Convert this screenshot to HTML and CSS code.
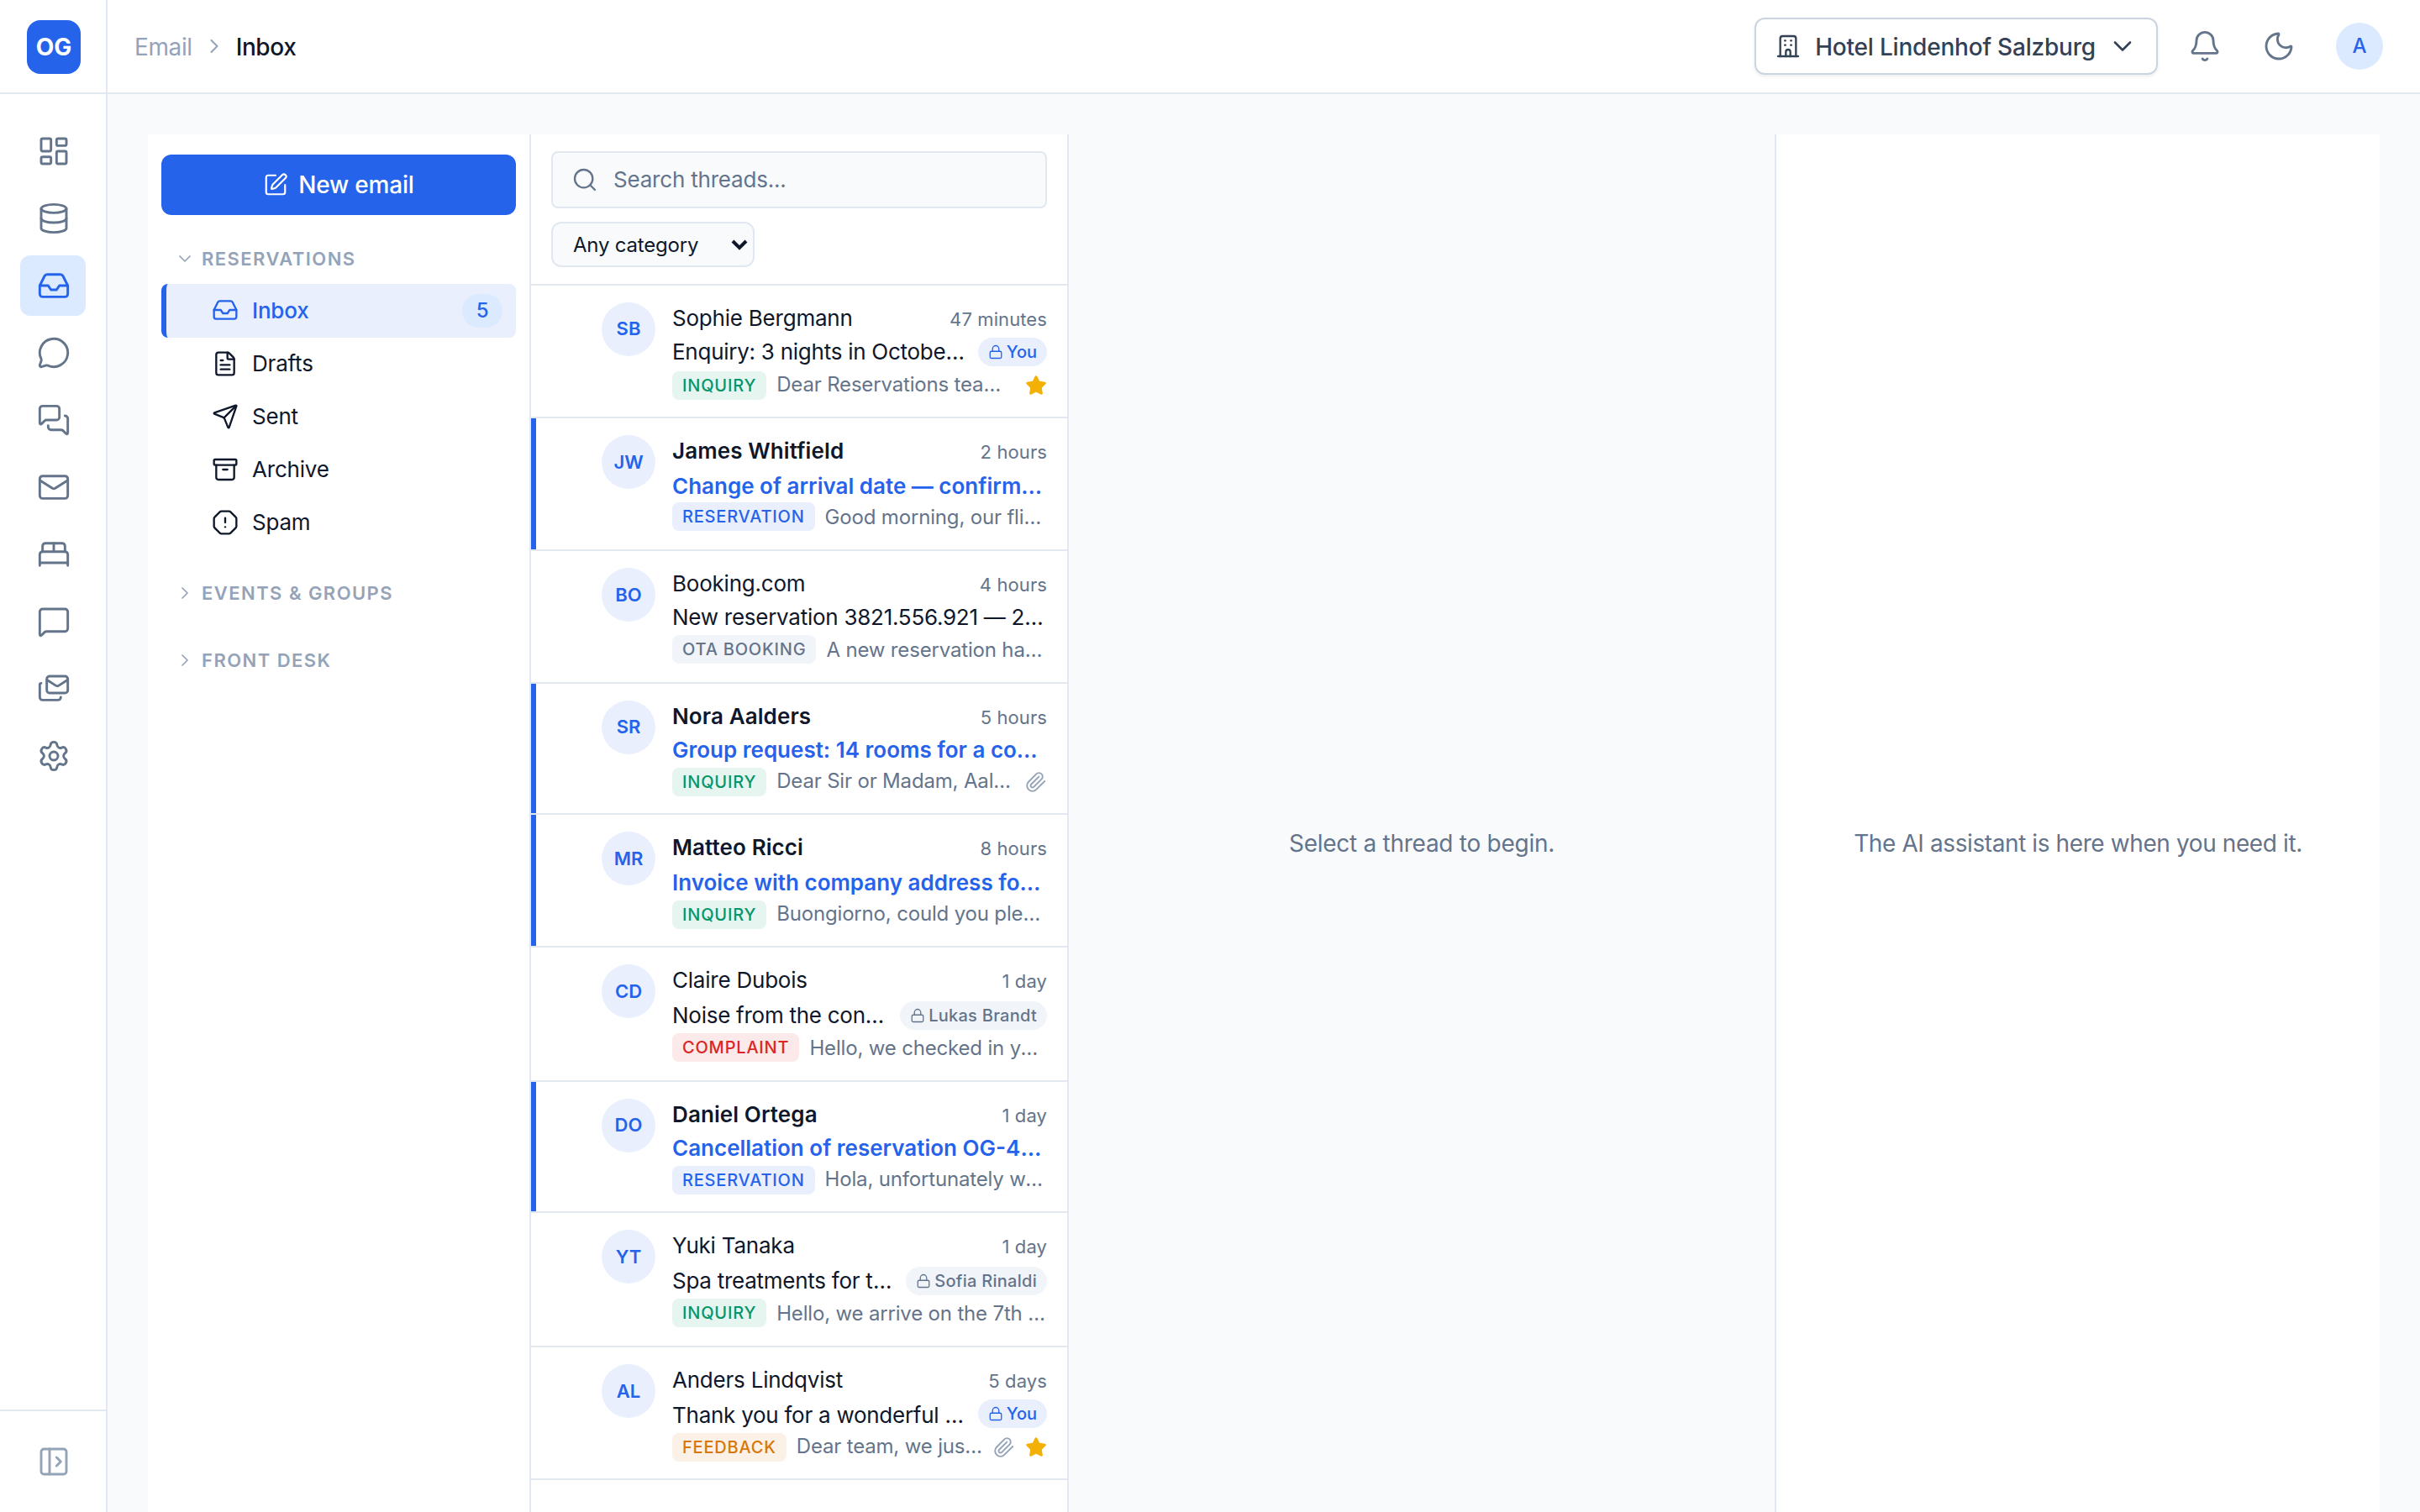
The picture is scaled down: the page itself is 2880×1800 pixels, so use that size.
FILE: index.html
```html
<!DOCTYPE html>
<html lang="en">

<head>
    <meta charset="UTF-8">
    <meta name="viewport" content="width=device-width, initial-scale=1.0">
    <title>Inbox</title>
    <link rel="stylesheet" href="styles.css">
</head>

<body>
    <svg class="sprite" aria-hidden="true">
        <symbol id="i-dashboard" viewBox="0 0 24 24"><rect width="7" height="9" x="3" y="3" rx="1"/><rect width="7" height="5" x="14" y="3" rx="1"/><rect width="7" height="9" x="14" y="12" rx="1"/><rect width="7" height="5" x="3" y="16" rx="1"/></symbol>
        <symbol id="i-database" viewBox="0 0 24 24"><ellipse cx="12" cy="5" rx="9" ry="3"/><path d="M3 5v14a9 3 0 0 0 18 0V5"/><path d="M3 12a9 3 0 0 0 18 0"/></symbol>
        <symbol id="i-inbox" viewBox="0 0 24 24"><path d="M22 12h-6l-2 3h-4l-2-3H2"/><path d="M5.45 5.11 2 12v6a2 2 0 0 0 2 2h16a2 2 0 0 0 2-2v-6l-3.45-6.89A2 2 0 0 0 16.76 4H7.24a2 2 0 0 0-1.79 1.11z"/></symbol>
        <symbol id="i-circle" viewBox="0 0 24 24"><path d="M2.992 16.342a2 2 0 0 1 .094 1.167l-1.065 3.29a1 1 0 0 0 1.236 1.168l3.413-.998a2 2 0 0 1 1.099.092 10 10 0 1 0-4.777-4.719"/></symbol>
        <symbol id="i-messages" viewBox="0 0 24 24"><path d="M16 10a2 2 0 0 1-2 2H6.828a2 2 0 0 0-1.414.586l-2.202 2.202A.71.71 0 0 1 2 14.286V4a2 2 0 0 1 2-2h10a2 2 0 0 1 2 2z"/><path d="M20 9a2 2 0 0 1 2 2v10.286a.71.71 0 0 1-1.212.502l-2.202-2.202A2 2 0 0 0 17.172 19H10a2 2 0 0 1-2-2v-1"/></symbol>
        <symbol id="i-mail" viewBox="0 0 24 24"><path d="m22 7-8.991 5.727a2 2 0 0 1-2.009 0L2 7"/><rect x="2" y="4" width="20" height="16" rx="2"/></symbol>
        <symbol id="i-bed" viewBox="0 0 24 24"><path d="M2 20v-8a2 2 0 0 1 2-2h16a2 2 0 0 1 2 2v8"/><path d="M4 10V6a2 2 0 0 1 2-2h12a2 2 0 0 1 2 2v4"/><path d="M12 4v6"/><path d="M2 18h20"/></symbol>
        <symbol id="i-message" viewBox="0 0 24 24"><path d="M22 17a2 2 0 0 1-2 2H6.828a2 2 0 0 0-1.414.586l-2.202 2.202A.71.71 0 0 1 2 21.286V5a2 2 0 0 1 2-2h16a2 2 0 0 1 2 2z"/></symbol>
        <symbol id="i-mails" viewBox="0 0 24 24"><path d="M17 18a2 2 0 0 1-2 2H4a2 2 0 0 1-2-2V9a1 1 0 0 1 1-1"/><path d="m22 5.5-6.419 4.179a2 2 0 0 1-2.162 0L7 5.5"/><rect x="7" y="3" width="15" height="12" rx="2"/></symbol>
        <symbol id="i-settings" viewBox="0 0 24 24"><path d="M9.671 4.136a2.34 2.34 0 0 1 4.659 0 2.34 2.34 0 0 0 3.319 1.915 2.34 2.34 0 0 1 2.33 4.033 2.34 2.34 0 0 0 0 3.831 2.34 2.34 0 0 1-2.33 4.033 2.34 2.34 0 0 0-3.319 1.915 2.34 2.34 0 0 1-4.659 0 2.34 2.34 0 0 0-3.32-1.915 2.34 2.34 0 0 1-2.33-4.033 2.34 2.34 0 0 0 0-3.831A2.34 2.34 0 0 1 6.35 6.051a2.34 2.34 0 0 0 3.319-1.915"/><circle cx="12" cy="12" r="3"/></symbol>
        <symbol id="i-panel" viewBox="0 0 24 24"><rect width="18" height="18" x="3" y="3" rx="2"/><path d="M9 3v18"/><path d="m14 9 3 3-3 3"/></symbol>
        <symbol id="i-right" viewBox="0 0 24 24"><path d="m9 18 6-6-6-6"/></symbol>
        <symbol id="i-down" viewBox="0 0 24 24"><path d="m6 9 6 6 6-6"/></symbol>
        <symbol id="i-building" viewBox="0 0 24 24"><path d="M3 21h18"/><path d="M5 21V5a2 2 0 0 1 2-2h10a2 2 0 0 1 2 2v16"/><path d="M10 21v-4a2 2 0 0 1 4 0v4"/><path d="M9.1 7h.5M14.4 7h.5M9.1 11h.5M14.4 11h.5"/></symbol>
        <symbol id="i-bell" viewBox="0 0 24 24"><path d="M10.268 21a2 2 0 0 0 3.464 0"/><path d="M3.262 15.326A1 1 0 0 0 4 17h16a1 1 0 0 0 .74-1.673C19.41 13.956 18 12.499 18 8A6 6 0 0 0 6 8c0 4.499-1.411 5.956-2.738 7.326"/></symbol>
        <symbol id="i-moon" viewBox="0 0 24 24"><path d="M20.985 12.486a9 9 0 1 1-9.473-9.472c.405-.022.617.46.402.803a6 6 0 0 0 8.268 8.268c.344-.215.825-.004.803.401"/></symbol>
        <symbol id="i-pen" viewBox="0 0 24 24"><path d="M12 3H5a2 2 0 0 0-2 2v14a2 2 0 0 0 2 2h14a2 2 0 0 0 2-2v-7"/><path d="M18.375 2.625a1 1 0 0 1 3 3l-9.013 9.014a2 2 0 0 1-.853.505l-2.873.84a.5.5 0 0 1-.62-.62l.84-2.873a2 2 0 0 1 .506-.852z"/></symbol>
        <symbol id="i-file" viewBox="0 0 24 24"><path d="M6 22a2 2 0 0 1-2-2V4a2 2 0 0 1 2-2h8a2.4 2.4 0 0 1 1.704.706l3.588 3.588A2.4 2.4 0 0 1 20 8v12a2 2 0 0 1-2 2z"/><path d="M14 2v5a1 1 0 0 0 1 1h5"/><path d="M10 9H8"/><path d="M16 13H8"/><path d="M16 17H8"/></symbol>
        <symbol id="i-send" viewBox="0 0 24 24"><path d="M14.536 21.686a.5.5 0 0 0 .937-.024l6.5-19a.496.496 0 0 0-.635-.635l-19 6.5a.5.5 0 0 0-.024.937l7.93 3.18a2 2 0 0 1 1.112 1.11z"/><path d="m21.854 2.147-10.94 10.939"/></symbol>
        <symbol id="i-archive" viewBox="0 0 24 24"><rect width="20" height="5" x="2" y="3" rx="1"/><path d="M4 8v11a2 2 0 0 0 2 2h12a2 2 0 0 0 2-2V8"/><path d="M10 12h4"/></symbol>
        <symbol id="i-spam" viewBox="0 0 24 24"><path d="M12 16h.01"/><path d="M12 8v4"/><path d="M15.312 2a2 2 0 0 1 1.414.586l4.688 4.688A2 2 0 0 1 22 8.688v6.624a2 2 0 0 1-.586 1.414l-4.688 4.688a2 2 0 0 1-1.414.586H8.688a2 2 0 0 1-1.414-.586l-4.688-4.688A2 2 0 0 1 2 15.312V8.688a2 2 0 0 1 .586-1.414l4.688-4.688A2 2 0 0 1 8.688 2z"/></symbol>
        <symbol id="i-search" viewBox="0 0 24 24"><path d="m21 21-4.34-4.34"/><circle cx="11" cy="11" r="8"/></symbol>
        <symbol id="i-lock" viewBox="0 0 24 24"><rect width="18" height="11" x="3" y="11" rx="2"/><path d="M7 11V7a5 5 0 0 1 10 0v4"/></symbol>
        <symbol id="i-clip" viewBox="0 0 24 24"><path d="m21.44 11.05-9.19 9.19a6 6 0 0 1-8.49-8.49l8.57-8.57A4 4 0 1 1 18 8.84l-8.59 8.57a2 2 0 0 1-2.83-2.83l8.49-8.48"/></symbol>
        <symbol id="i-star" viewBox="0 0 24 24"><path d="M11.525 2.295a.53.53 0 0 1 .95 0l2.31 4.679a2.123 2.123 0 0 0 1.595 1.16l5.166.756a.53.53 0 0 1 .294.904l-3.736 3.638a2.123 2.123 0 0 0-.611 1.878l.882 5.14a.53.53 0 0 1-.771.56l-4.618-2.428a2.122 2.122 0 0 0-1.973 0L6.396 21.01a.53.53 0 0 1-.77-.56l.881-5.139a2.122 2.122 0 0 0-.611-1.879L2.16 9.795a.53.53 0 0 1 .294-.906l5.165-.755a2.122 2.122 0 0 0 1.597-1.16z"/></symbol>
    </svg>

    <div class="app">
        <aside class="rail">
            <div class="rail-top">
                <div class="logo">OG</div>
            </div>
            <nav class="rail-nav">
                <a class="rail-item"><svg class="icon"><use href="#i-dashboard"/></svg></a>
                <a class="rail-item"><svg class="icon"><use href="#i-database"/></svg></a>
                <a class="rail-item active"><svg class="icon"><use href="#i-inbox"/></svg></a>
                <a class="rail-item"><svg class="icon"><use href="#i-circle"/></svg></a>
                <a class="rail-item"><svg class="icon"><use href="#i-messages"/></svg></a>
                <a class="rail-item"><svg class="icon"><use href="#i-mail"/></svg></a>
                <a class="rail-item"><svg class="icon"><use href="#i-bed"/></svg></a>
                <a class="rail-item"><svg class="icon"><use href="#i-message"/></svg></a>
                <a class="rail-item"><svg class="icon"><use href="#i-mails"/></svg></a>
                <a class="rail-item"><svg class="icon"><use href="#i-settings"/></svg></a>
            </nav>
            <div class="rail-bottom"><svg class="icon"><use href="#i-panel"/></svg></div>
        </aside>

        <div class="main">
            <header class="topbar">
                <div class="crumbs">
                    <span class="crumb-parent">Email</span>
                    <svg class="icon crumb-sep"><use href="#i-right"/></svg>
                    <span class="crumb-current">Inbox</span>
                </div>
                <button class="hotel">
                    <svg class="icon hotel-icon"><use href="#i-building"/></svg>
                    <span class="hotel-name">Hotel Lindenhof Salzburg</span>
                    <svg class="icon hotel-arrow"><use href="#i-down"/></svg>
                </button>
                <div class="top-actions">
                    <a class="top-btn"><svg class="icon"><use href="#i-bell"/></svg></a>
                    <a class="top-btn"><svg class="icon"><use href="#i-moon"/></svg></a>
                </div>
                <div class="user">A</div>
            </header>

            <div class="workspace">
                <section class="folders">
                    <button class="compose"><svg class="icon"><use href="#i-pen"/></svg>New email</button>
                    <div class="group"><svg class="icon"><use href="#i-down"/></svg>RESERVATIONS</div>
                    <ul class="folder-list">
                        <li class="folder active"><svg class="icon"><use href="#i-inbox"/></svg>Inbox<span class="count">5</span></li>
                        <li class="folder"><svg class="icon"><use href="#i-file"/></svg>Drafts</li>
                        <li class="folder"><svg class="icon"><use href="#i-send"/></svg>Sent</li>
                        <li class="folder"><svg class="icon"><use href="#i-archive"/></svg>Archive</li>
                        <li class="folder"><svg class="icon"><use href="#i-spam"/></svg>Spam</li>
                    </ul>
                    <div class="group"><svg class="icon"><use href="#i-right"/></svg>EVENTS &amp; GROUPS</div>
                    <div class="group"><svg class="icon"><use href="#i-right"/></svg>FRONT DESK</div>
                </section>

                <section class="threads">
                    <div class="filters">
                        <div class="search"><svg class="icon"><use href="#i-search"/></svg><span class="search-text">Search threads...</span></div>
                        <div class="category">Any category<svg class="category-arrow" viewBox="0 0 20 14"><path d="m2 3 8 8 8-8"/></svg></div>
                    </div>

                    <article class="thread initials-up tag-down">
                        <div class="avatar">SB</div>
                        <div class="thread-body">
                            <div class="line-name"><span class="name">Sophie Bergmann</span><span class="time">47 minutes</span></div>
                            <div class="line-subject"><span class="subject">Enquiry: 3 nights in October for two adults</span><span class="owner mine"><svg class="icon"><use href="#i-lock"/></svg>You</span></div>
                            <div class="line-preview"><span class="tag green">INQUIRY</span><span class="preview">Dear Reservations team, we would like to stay</span><svg class="icon star"><use href="#i-star"/></svg></div>
                        </div>
                    </article>

                    <article class="thread unread subject-down">
                        <div class="avatar">JW</div>
                        <div class="thread-body">
                            <div class="line-name"><span class="name">James Whitfield</span><span class="time">2 hours</span></div>
                            <div class="line-subject"><span class="subject">Change of arrival date — confirmation needed</span></div>
                            <div class="line-preview"><span class="tag blue">RESERVATION</span><span class="preview">Good morning, our flight has been moved</span></div>
                        </div>
                    </article>

                    <article class="thread">
                        <div class="avatar">BO</div>
                        <div class="thread-body">
                            <div class="line-name"><span class="name">Booking.com</span><span class="time">4 hours</span></div>
                            <div class="line-subject"><span class="subject">New reservation 3821.556.921 — 2 nights</span></div>
                            <div class="line-preview"><span class="tag gray">OTA BOOKING</span><span class="preview">A new reservation has been made</span></div>
                        </div>
                    </article>

                    <article class="thread unread initials-up short">
                        <div class="avatar">SR</div>
                        <div class="thread-body">
                            <div class="line-name"><span class="name">Nora Aalders</span><span class="time">5 hours</span></div>
                            <div class="line-subject"><span class="subject">Group request: 14 rooms for a company retreat</span></div>
                            <div class="line-preview"><span class="tag green">INQUIRY</span><span class="preview">Dear Sir or Madam, Aalders Group is planning</span><svg class="icon clip"><use href="#i-clip"/></svg></div>
                        </div>
                    </article>

                    <article class="thread unread subject-down tag-down">
                        <div class="avatar">MR</div>
                        <div class="thread-body">
                            <div class="line-name"><span class="name">Matteo Ricci</span><span class="time">8 hours</span></div>
                            <div class="line-subject"><span class="subject">Invoice with company address for our stay</span></div>
                            <div class="line-preview"><span class="tag green">INQUIRY</span><span class="preview">Buongiorno, could you please send the invoice</span></div>
                        </div>
                    </article>

                    <article class="thread subject-down tag-down tall">
                        <div class="avatar">CD</div>
                        <div class="thread-body">
                            <div class="line-name"><span class="name">Claire Dubois</span><span class="time">1 day</span></div>
                            <div class="line-subject"><span class="subject">Noise from the construction site</span><span class="owner"><svg class="icon"><use href="#i-lock"/></svg>Lukas Brandt</span></div>
                            <div class="line-preview"><span class="tag red">COMPLAINT</span><span class="preview">Hello, we checked in yesterday evening</span></div>
                        </div>
                    </article>

                    <article class="thread unread initials-up short">
                        <div class="avatar">DO</div>
                        <div class="thread-body">
                            <div class="line-name"><span class="name">Daniel Ortega</span><span class="time">1 day</span></div>
                            <div class="line-subject"><span class="subject">Cancellation of reservation OG-48213</span></div>
                            <div class="line-preview"><span class="tag blue">RESERVATION</span><span class="preview">Hola, unfortunately we have to cancel</span></div>
                        </div>
                    </article>

                    <article class="thread subject-down tag-down tall">
                        <div class="avatar">YT</div>
                        <div class="thread-body">
                            <div class="line-name"><span class="name">Yuki Tanaka</span><span class="time">1 day</span></div>
                            <div class="line-subject"><span class="subject">Spa treatments for two guests</span><span class="owner"><svg class="icon"><use href="#i-lock"/></svg>Sofia Rinaldi</span></div>
                            <div class="line-preview"><span class="tag green">INQUIRY</span><span class="preview">Hello, we arrive on the 7th and would like</span></div>
                        </div>
                    </article>

                    <article class="thread subject-down tag-down">
                        <div class="avatar">AL</div>
                        <div class="thread-body">
                            <div class="line-name"><span class="name">Anders Lindqvist</span><span class="time">5 days</span></div>
                            <div class="line-subject"><span class="subject">Thank you for a wonderful weekend</span><span class="owner mine"><svg class="icon"><use href="#i-lock"/></svg>You</span></div>
                            <div class="line-preview"><span class="tag orange">FEEDBACK</span><span class="preview">Dear team, we just got home</span><svg class="icon clip"><use href="#i-clip"/></svg><svg class="icon star"><use href="#i-star"/></svg></div>
                        </div>
                    </article>
                </section>

                <section class="reader">Select a thread to begin.</section>
                <section class="assistant">The AI assistant is here when you need it.</section>
            </div>
        </div>
    </div>
</body>

</html>
```
FILE: styles.css
```css
:root {
    --blue: #2563eb;
    --blue-soft: #e9effd;
    --blue-light: #dbeafe;
    --ink: #0f172a;
    --slate: #64748b;
    --muted: #94a3b8;
    --line: #e2e8f0;
    --canvas: #f8fafc;
}

* {
    box-sizing: border-box;
}

body {
    margin: 0;
    height: 1800px;
    overflow: hidden;
    background: var(--canvas);
    color: var(--ink);
    font-family: Inter, "Liberation Sans", sans-serif;
    font-size: 28px;
}

button {
    font: inherit;
}

.sprite {
    display: none;
}

.icon {
    width: 40px;
    height: 40px;
    flex: none;
    fill: none;
    stroke: currentColor;
    stroke-width: 1.75;
    stroke-linecap: round;
    stroke-linejoin: round;
}

.app {
    display: flex;
    height: 1800px;
}

/* left rail */
.rail {
    display: flex;
    flex-direction: column;
    width: 128px;
    flex: none;
    background: #fff;
    border-right: 2px solid var(--line);
    color: var(--slate);
}

.rail-top {
    height: 112px;
    padding: 24px 0 0 32px;
    border-bottom: 2px solid var(--line);
}

.logo {
    width: 64px;
    height: 64px;
    border-radius: 16px;
    background: var(--blue);
    color: #fff;
    font-weight: 700;
    line-height: 65px;
    text-align: center;
}

.rail-nav {
    display: flex;
    flex: 1;
    flex-direction: column;
    gap: 8px;
    padding: 32px 24px;
}

.rail-item {
    display: flex;
    align-items: center;
    height: 72px;
    padding-left: 20px;
    border-radius: 12px;
}

.rail-item.active {
    background: var(--blue-light);
    color: var(--blue);
}

.rail-bottom {
    display: flex;
    align-items: center;
    height: 122px;
    padding-left: 44px;
    border-top: 2px solid var(--line);
    color: var(--muted);
}

/* top bar */
.main {
    flex: 1;
    min-width: 0;
}

.topbar {
    display: flex;
    align-items: center;
    height: 112px;
    padding: 0 44px 0 32px;
    background: #fff;
    border-bottom: 2px solid var(--line);
}

.crumbs {
    display: flex;
    align-items: center;
    gap: 12px;
    margin-right: auto;
    letter-spacing: -.4px;
}

.crumb-parent,
.crumb-current,
.hotel-name {
    padding-top: 2px;
}

.crumb-parent,
.crumb-sep {
    color: var(--muted);
}

.crumb-sep {
    width: 28px;
    height: 28px;
}

.crumb-current {
    font-weight: 500;
}

.hotel {
    display: flex;
    align-items: center;
    height: 68px;
    padding: 0 22px;
    margin-right: 20px;
    border: 2px solid #cbd5e1;
    border-radius: 12px;
    background: #fff;
    box-shadow: 0 2px 4px rgba(15, 23, 42, .08);
    color: #334155;
    font-weight: 500;
    letter-spacing: -.2px;
}

.hotel-icon {
    width: 32px;
    height: 32px;
    margin-right: 16px;
}

.hotel-arrow {
    width: 36px;
    height: 36px;
    margin-left: 14px;
}

.top-actions {
    display: flex;
    gap: 16px;
    margin-right: 32px;
    color: var(--slate);
}

.top-btn {
    display: flex;
    padding: 16px;
}

.user {
    width: 56px;
    height: 56px;
    border-radius: 50%;
    background: var(--blue-light);
    color: var(--blue);
    font-size: 24px;
    font-weight: 500;
    line-height: 56px;
    text-align: center;
}

.workspace {
    display: flex;
    height: 1688px;
    margin: 48px 48px 0;
}

/* folders */
.folders {
    width: 456px;
    padding: 24px 16px;
    background: #fff;
    border-right: 2px solid var(--line);
}

.compose {
    display: flex;
    align-items: center;
    justify-content: center;
    gap: 12px;
    width: 100%;
    height: 72px;
    margin-bottom: 34px;
    border: 0;
    border-radius: 12px;
    background: var(--blue);
    color: #fff;
    font-weight: 500;
    letter-spacing: -.2px;
}

.compose .icon {
    width: 30px;
    height: 30px;
}

.group {
    display: flex;
    align-items: center;
    gap: 8px;
    height: 36px;
    margin-bottom: 44px;
    padding-left: 16px;
    color: var(--muted);
    font-size: 22px;
    font-weight: 600;
    letter-spacing: 1.45px;
}

.group .icon {
    width: 24px;
    height: 24px;
}

.folder-list {
    margin: -32px 0 34px;
    padding: 0;
    list-style: none;
}

.folder {
    display: flex;
    align-items: center;
    height: 63px;
    padding: 0 16px 2px 54px;
    border-left: 6px solid transparent;
    border-radius: 8px;
    font-size: 26px;
    letter-spacing: -.2px;
}

.folder.active {
    height: 64px;
    border-color: var(--blue);
    background: var(--blue-soft);
    color: var(--blue);
    font-weight: 500;
}

.folder .icon {
    width: 32px;
    height: 32px;
    margin-right: 16px;
}

.count {
    width: 48px;
    height: 40px;
    margin: 2px 0 0 auto;
    border-radius: 20px;
    background: var(--blue-light);
    font-size: 24px;
    line-height: 40px;
    text-align: center;
}

/* thread list */
.threads {
    width: 640px;
    background: #fff;
    border-right: 2px solid var(--line);
}

.filters {
    height: 180px;
    padding: 20px 24px 0;
    border-bottom: 2px solid var(--line);
}

.search {
    display: flex;
    align-items: center;
    height: 68px;
    padding-left: 22px;
    border: 2px solid var(--line);
    border-radius: 8px;
    background: var(--canvas);
    color: var(--slate);
    font-size: 26px;
    letter-spacing: -.2px;
}

.search .icon {
    width: 32px;
    height: 32px;
    margin-right: 18px;
}

.search-text {
    padding-bottom: 2px;
}

.category {
    display: flex;
    align-items: center;
    justify-content: space-between;
    width: 242px;
    height: 54px;
    margin-top: 16px;
    padding: 0 6px 0 24px;
    border: 2px solid var(--line);
    border-radius: 12px;
    background: var(--canvas);
    font-size: 24px;
    letter-spacing: -.2px;
}

.category-arrow {
    width: 20px;
    height: 14px;
    fill: none;
    stroke: var(--ink);
    stroke-width: 4;
}

.thread {
    --initials: 64px;
    --subject: 0px;
    --owner: 0px;
    --tag: 0px;
    --preview: 0px;
    display: flex;
    height: 158px;
    padding: 20px 24px 0 84px;
    border-bottom: 2px solid var(--line);
}

.thread.unread {
    box-shadow: inset 6px 0 var(--blue);
}

.thread.initials-up {
    --initials: 62px;
}

.thread.subject-down {
    --subject: 2px;
}

.thread.tag-down {
    --tag: 2px;
}

.thread.short {
    --preview: -2px;
    height: 156px;
}

.thread.tall {
    --owner: 2px;
    --preview: 2px;
    height: 160px;
}

.avatar {
    width: 64px;
    height: 64px;
    margin-right: 20px;
    flex: none;
    border-radius: 50%;
    background: var(--blue-soft);
    color: var(--blue);
    font-size: 22px;
    font-weight: 600;
    line-height: var(--initials);
    text-align: center;
}

.thread-body {
    flex: 1;
    min-width: 0;
}

.line-name {
    display: flex;
    align-items: baseline;
    justify-content: space-between;
    height: 40px;
    font-size: 26px;
    line-height: 38px;
}

.name {
    letter-spacing: -.22px;
}

.time {
    color: var(--slate);
    font-size: 22px;
    letter-spacing: .1px;
}

.line-subject,
.line-preview {
    display: flex;
    align-items: flex-start;
    height: 40px;
}

.subject,
.preview {
    flex: 1;
    overflow: hidden;
    text-overflow: ellipsis;
    white-space: nowrap;
}

.subject {
    margin-top: var(--subject);
    font-size: 26px;
    letter-spacing: -.26px;
    line-height: 38px;
}

.unread .name,
.unread .subject {
    font-weight: 600;
    letter-spacing: 0;
}

.unread .name {
    letter-spacing: .1px;
}

.unread .subject {
    color: var(--blue);
}

.owner {
    display: flex;
    align-items: center;
    gap: 4px;
    height: 34px;
    margin: calc(2px + var(--owner)) 0 0 12px;
    padding: 0 12px;
    border-radius: 17px;
    background: #f1f5f9;
    color: var(--slate);
    font-size: 20px;
    font-weight: 500;
    letter-spacing: .27px;
}

.owner.mine {
    background: var(--blue-soft);
    color: var(--blue);
    letter-spacing: 0;
}

.owner .icon {
    width: 18px;
    height: 18px;
}

.tag {
    height: 34px;
    margin: var(--tag) 12px 0 0;
    padding: 0 12px;
    border-radius: 8px;
    font-size: 20px;
    font-weight: 500;
    letter-spacing: .8px;
    line-height: 34px;
}

.tag.green {
    background: #e6f5f0;
    color: #059669;
}

.tag.blue {
    background: var(--blue-soft);
    color: var(--blue);
}

.tag.gray {
    background: #f1f5f9;
    color: var(--slate);
}

.tag.red {
    background: #fce9e9;
    color: #dc2626;
}

.tag.orange {
    background: #fbf1e6;
    color: #d97706;
}

.preview {
    margin-top: var(--preview);
    color: var(--slate);
    font-size: 24px;
    letter-spacing: -.17px;
    line-height: 36px;
}

.line-preview .icon {
    width: 26px;
    height: 26px;
    margin: calc(6px + var(--preview)) 0 0 12px;
}

.clip {
    color: var(--muted);
}

.line-preview .star {
    fill: #f3b106;
    stroke: #f3b106;
}

/* empty states */
.reader,
.assistant {
    display: flex;
    align-items: center;
    justify-content: center;
    color: var(--slate);
}

.reader {
    width: 840px;
    letter-spacing: -.27px;
}

.assistant {
    width: 720px;
    background: #fff;
    border-left: 2px solid var(--line);
    letter-spacing: -.4px;
}
```
